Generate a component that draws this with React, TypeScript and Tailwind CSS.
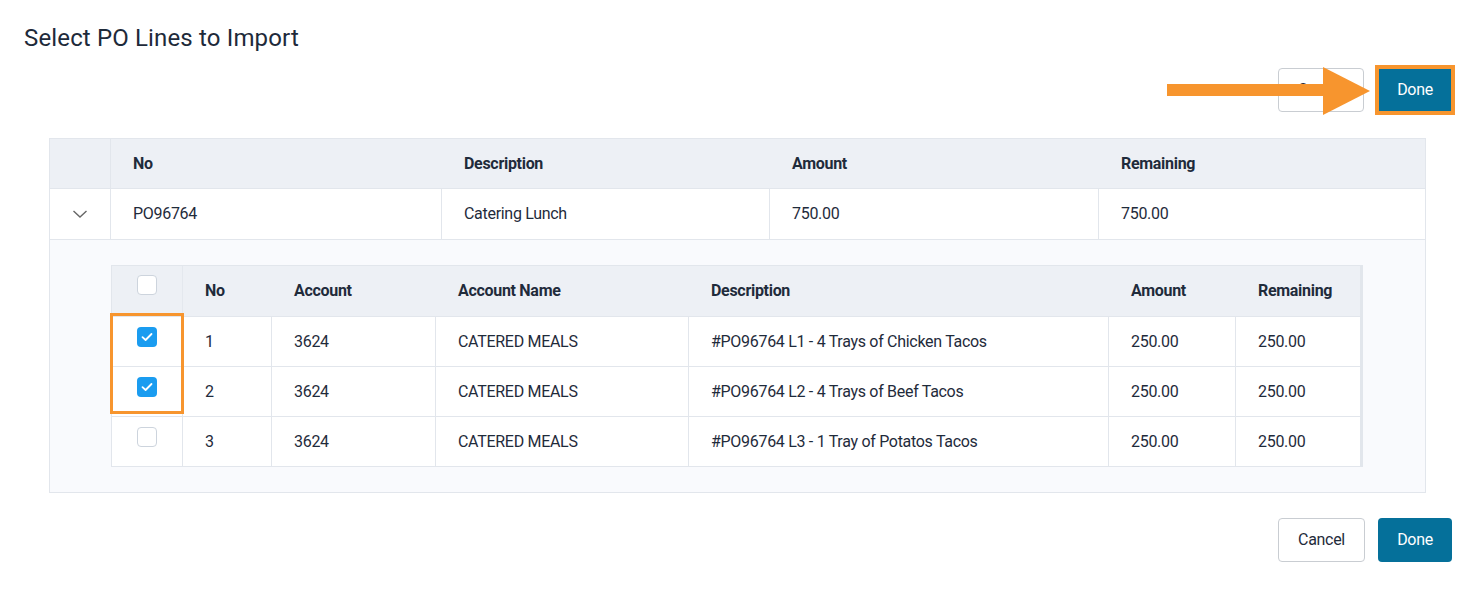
import React from "react";

const Check = ({ checked }: { checked: boolean }) =>
  checked ? (
    <div className="w-5 h-5 rounded-[4px] bg-[#1a9cf0] flex items-center justify-center">
      <svg width="12" height="10" viewBox="0 0 12 10" fill="none">
        <path d="M1.5 5.2 L4.6 8 L10.5 2" stroke="white" strokeWidth="1.8" strokeLinecap="round" strokeLinejoin="round" />
      </svg>
    </div>
  ) : (
    <div className="w-5 h-5 rounded-[4px] bg-white border border-[#cdd4dd]" />
  );

const lines = [
  { no: "1", desc: "#PO96764 L1 - 4 Trays of Chicken Tacos", checked: true },
  { no: "2", desc: "#PO96764 L2 - 4 Trays of Beef Tacos", checked: true },
  { no: "3", desc: "#PO96764 L3 - 1 Tray of Potatos Tacos", checked: false },
];

export default function App() {
  const outerCols = "grid grid-cols-[61px_331px_328px_329px_328px]";
  const innerCols = "grid grid-cols-[71px_89px_164px_253px_420px_127px_127px]";
  return (
    <div
      className="w-[1471px] h-[598px] bg-white text-[#1f2b3b] px-6 pt-[22px] relative"
      style={{ fontFamily: "Roboto, 'Noto Sans', sans-serif" }}
    >
      <h1 className="text-[24px] leading-8 font-normal tracking-[0.15px] text-[#1e2a3a]">Select PO Lines to Import</h1>

      <div className="flex justify-end gap-[14px] mt-[14px] -mr-[5px] tracking-[-0.3px]">
        <button className="h-11 w-[86px] border border-[#c9cdd2] rounded-[4px] bg-white text-[16px] text-[#1f2b3b]">
          Cancel
        </button>
        <button className="h-11 w-[74px] bg-[#05709a] text-white text-[16px] outline-[4px] outline-solid outline-[#f7952e] outline-offset-[-1px]">
          Done
        </button>
      </div>

      <svg className="absolute left-[1167px] top-[66px]" width="206" height="50" viewBox="0 0 206 50">
        <rect x="0" y="18" width="160" height="12" fill="#f7952e" />
        <polygon points="156,1 203,25 156,49" fill="#f7952e" />
      </svg>

      <div className="mt-[26px] ml-[25px] w-[1377px] border border-[#e2e6ec] text-[16px] tracking-[-0.3px]">
        <div className={`${outerCols} h-[49px] bg-[#edf0f5] font-bold items-center`}>
          <div className="h-full border-r border-[#e2e6ec]" />
          <div className="pl-[22px]">No</div>
          <div className="pl-[22px]">Description</div>
          <div className="pl-[22px]">Amount</div>
          <div className="pl-[22px]">Remaining</div>
        </div>
        <div className={`${outerCols} h-[51px] bg-white border-t border-[#e2e6ec]`}>
          <div className="flex items-center justify-center border-r border-[#e2e6ec]">
            <svg width="16" height="10" viewBox="0 0 16 10" fill="none">
              <path d="M1.5 2 L8 8 L14.5 2" stroke="#666" strokeWidth="1.4" />
            </svg>
          </div>
          <div className="flex items-center pl-[22px] border-r border-[#e2e6ec]">PO96764</div>
          <div className="flex items-center pl-[22px] border-r border-[#e2e6ec]">Catering Lunch</div>
          <div className="flex items-center pl-[22px] border-r border-[#e2e6ec]">750.00</div>
          <div className="flex items-center pl-[22px]">750.00</div>
        </div>
        <div className="bg-[#f9fafd] border-t border-[#e2e6ec] pl-[61px] pt-[25px] pb-[25px]">
          <div className="relative w-[1252px] border border-[#e2e6ec] border-r-[3px]">
            <div className={`${innerCols} h-[50px] bg-[#edf0f5] font-bold`}>
              <div className="flex justify-center pt-[9px] border-r border-[#e4e8ee]">
                <Check checked={false} />
              </div>
              <div className="flex items-center pl-[22px]">No</div>
              <div className="flex items-center pl-[22px]">Account</div>
              <div className="flex items-center pl-[22px]">Account Name</div>
              <div className="flex items-center pl-[22px]">Description</div>
              <div className="flex items-center pl-[22px]">Amount</div>
              <div className="flex items-center pl-[22px]">Remaining</div>
            </div>
            {lines.map((l) => (
              <div key={l.no} className={`${innerCols} h-[50px] bg-white border-t border-[#e2e6ec]`}>
                <div className="flex justify-center pt-[10px] border-r border-[#e2e6ec]">
                  <Check checked={l.checked} />
                </div>
                <div className="flex items-center pl-[22px] border-r border-[#e2e6ec]">{l.no}</div>
                <div className="flex items-center pl-[22px] border-r border-[#e2e6ec]">3624</div>
                <div className="flex items-center pl-[22px] border-r border-[#e2e6ec]">CATERED MEALS</div>
                <div className="flex items-center pl-[22px] border-r border-[#e2e6ec]">{l.desc}</div>
                <div className="flex items-center pl-[22px] border-r border-[#e2e6ec]">250.00</div>
                <div className="flex items-center pl-[22px]">250.00</div>
              </div>
            ))}
            <div className="absolute left-[-2px] top-[47px] w-[74px] h-[101px] border-[3px] border-[#f7952e]" />
          </div>
        </div>
      </div>

      <div className="flex justify-end gap-[13px] mt-[25px] -mr-[5px] tracking-[-0.3px]">
        <button className="h-11 w-[87px] border border-[#c9cdd2] rounded-[4px] bg-white text-[16px] text-[#1f2b3b]">
          Cancel
        </button>
        <button className="h-11 w-[74px] rounded-[4px] bg-[#05709a] text-white text-[16px]">
          Done
        </button>
      </div>
    </div>
  );
}
